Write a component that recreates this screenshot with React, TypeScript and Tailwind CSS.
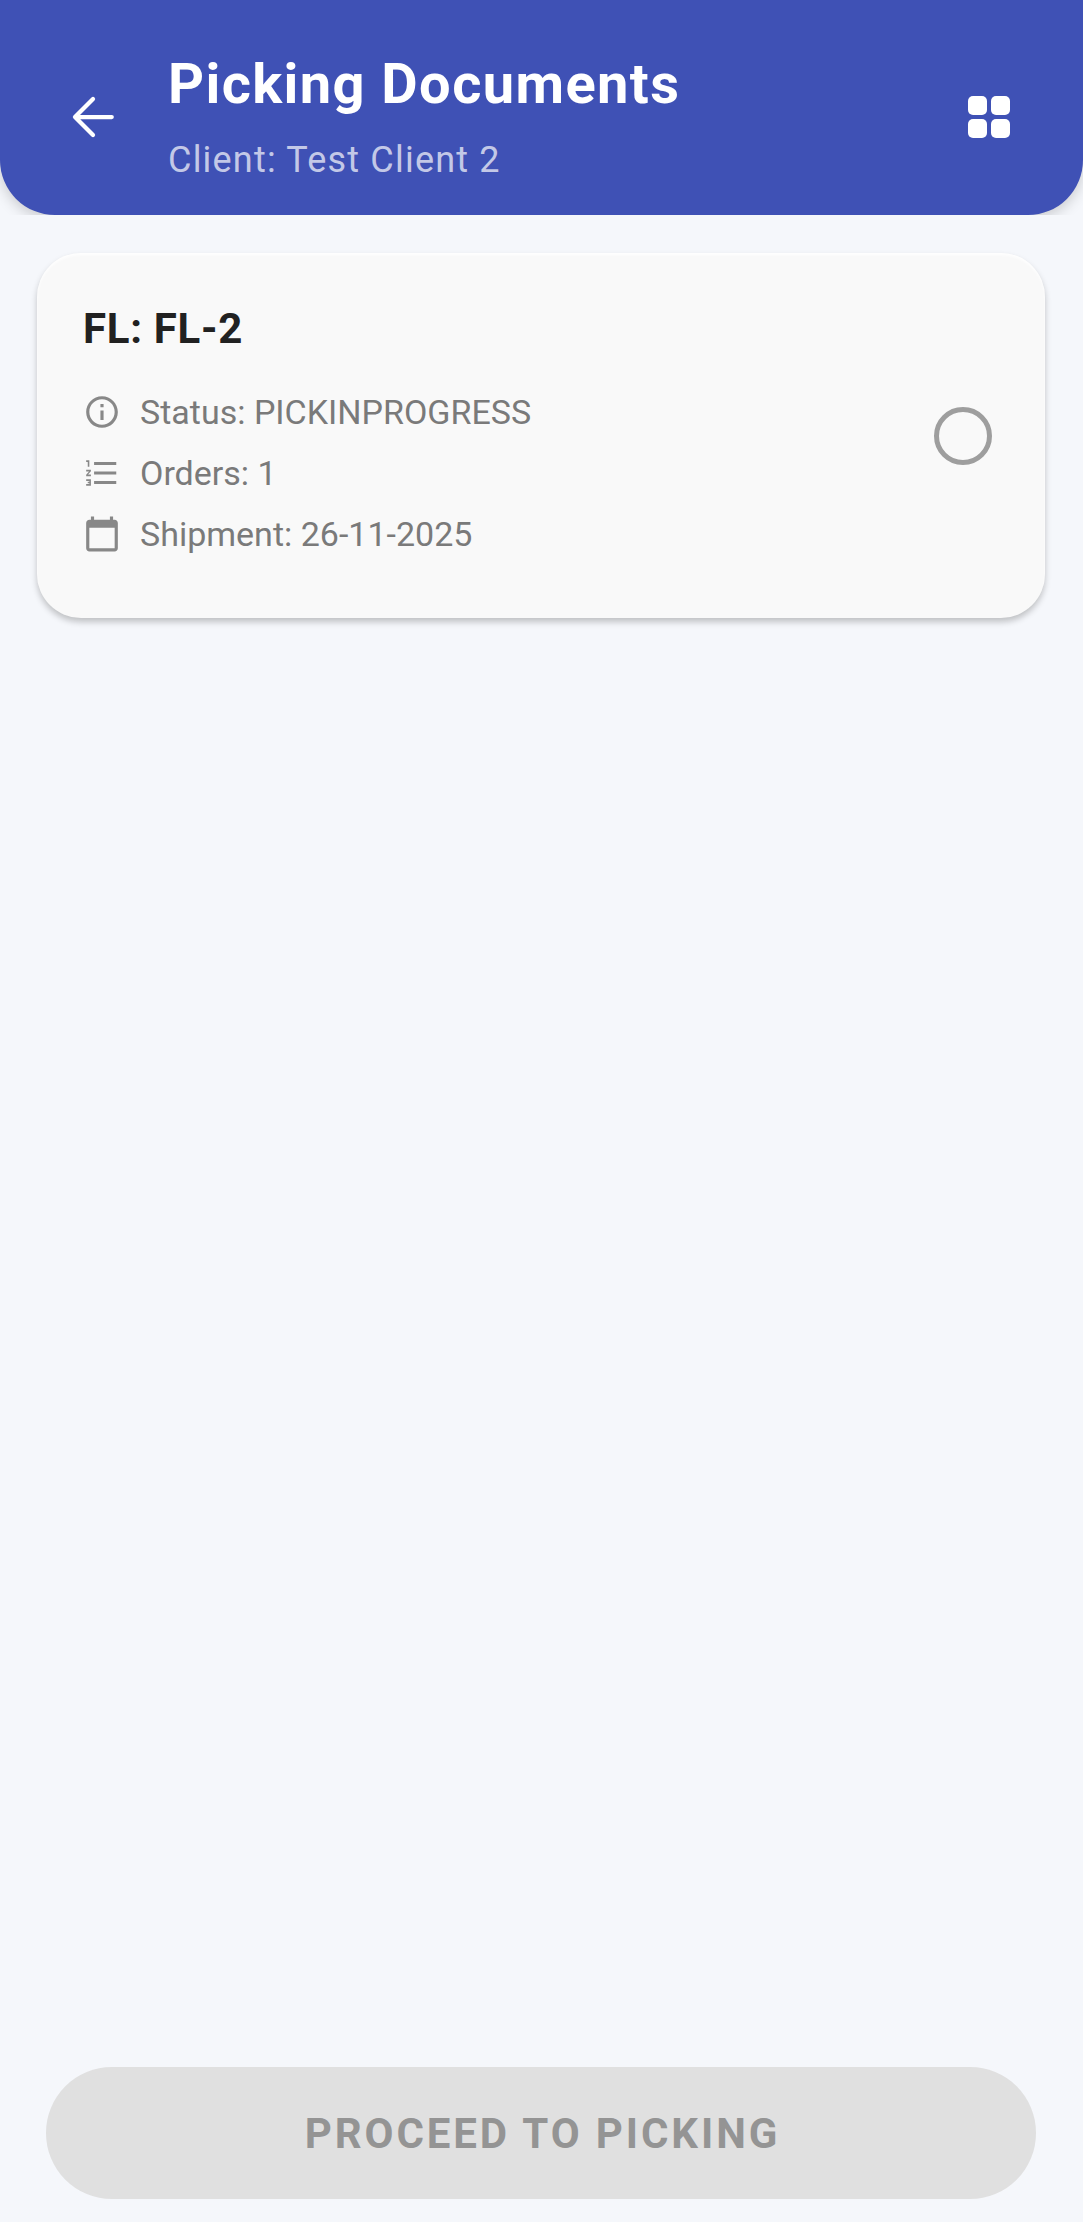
const font = { fontFamily: "Roboto, sans-serif" };

function Icon({ d, className }: { d: string; className: string }) {
  return (
    <svg viewBox="0 0 24 24" fill="currentColor" className={className}>
      <path d={d} />
    </svg>
  );
}

const rows = [
  {
    text: "Status: PICKINPROGRESS",
    d: "M11 7h2v2h-2zm0 4h2v6h-2zm1-9C6.48 2 2 6.48 2 12s4.48 10 10 10 10-4.48 10-10S17.52 2 12 2zm0 18c-4.41 0-8-3.59-8-8s3.59-8 8-8 8 3.59 8 8-3.59 8-8 8z",
  },
  {
    text: "Orders: 1",
    d: "M2 17h2v.5H3v1h1v.5H2v1h3v-4H2v1zm1-9h1V4H2v1h1v3zm-1 3h1.8L2 13.1v.9h3v-1H3.2L5 10.9V10H2v1zm5-6v2h14V5H7zm0 14h14v-2H7v2zm0-6h14v-2H7v2z",
  },
  {
    text: "Shipment: 26-11-2025",
    d: "M20 3h-1V1h-2v2H7V1H5v2H4c-1.1 0-2 .9-2 2v16c0 1.1.9 2 2 2h16c1.1 0 2-.9 2-2V5c0-1.1-.9-2-2-2zm0 18H4V8h16v13z",
  },
];

export default function App() {
  return (
    <div className="h-[2222px] flex flex-col bg-[#f5f7fb]" style={font}>
      <header className="h-[215px] shrink-0 bg-[#3f51b5] rounded-b-[55px] shadow-[0_4px_14px_rgba(0,0,0,0.18)] flex items-center pl-[63px] pr-[73px] pt-[18px] text-white">
        <svg viewBox="0 0 24 24" fill="none" stroke="currentColor" strokeWidth="1.7" strokeLinecap="round" strokeLinejoin="round" className="w-[60px] h-[60px] shrink-0">
          <path d="M19.5 12H4.8M12 4.8 4.8 12l7.2 7.2" />
        </svg>
        <div className="ml-[45px] flex-1 flex flex-col">
          <div className="text-[56px] leading-[66px] font-bold tracking-[1.4px] -mt-[1px]">Picking Documents</div>
          <div className="text-[36px] leading-[42px] mt-[22px] tracking-[1.2px] text-white/70">Client: Test Client 2</div>
        </div>
        <svg viewBox="0 0 42 42" fill="currentColor" className="w-[42px] h-[42px] shrink-0">
          <rect x="0" y="0" width="19" height="19" rx="5" />
          <rect x="23" y="0" width="19" height="19" rx="5" />
          <rect x="0" y="23" width="19" height="19" rx="5" />
          <rect x="23" y="23" width="19" height="19" rx="5" />
        </svg>
      </header>

      <main className="relative flex-1 bg-[#f5f7fb] px-[37px] pt-[38px]">
        <div className="h-[365px] w-[1008px] rounded-[44px] bg-[#f9f9f9] shadow-[0_4px_6px_rgba(0,0,0,0.22),inset_0_2px_3px_rgba(255,255,255,0.9)] flex items-center pl-[46px] pr-[53px]">
          <div className="flex-1 self-start pt-[51px]">
            <div className="text-[42px] leading-[49px] font-bold tracking-[0.7px] text-[#212121]">FL: FL-2</div>
            <div className="mt-[40px] flex flex-col gap-[23px]">
              {rows.map((row) => (
                <div key={row.text} className="flex items-center h-[38px] text-[#7a7a7a]">
                  <Icon d={row.d} className="w-[38px] h-[38px] shrink-0 text-[#888888]" />
                  <span className="ml-[19px] text-[34px] leading-[38px]">{row.text}</span>
                </div>
              ))}
            </div>
          </div>
          <div className="w-[58px] h-[58px] rounded-full border-[5px] border-[#9e9e9e] shrink-0" />
        </div>
      </main>

      <footer className="relative bg-[#f5f7fb] pl-[46px] pr-[47px] pb-[23px]">
        <div className="h-[132px] rounded-full bg-[#e0e0e0] flex items-center justify-center pl-[3px] text-[42px] font-bold tracking-[2.9px] text-[#949494]">
          PROCEED TO PICKING
        </div>
      </footer>
    </div>
  );
}
